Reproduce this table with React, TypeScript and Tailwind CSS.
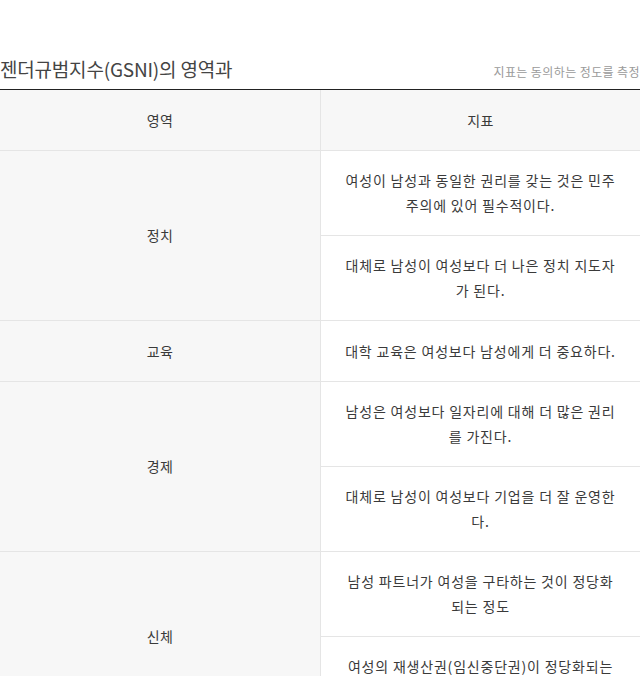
const rows: { area: string; items: string[][] }[] = [
  {
    area: "정치",
    items: [
      ["여성이 남성과 동일한 권리를 갖는 것은 민주", "주의에 있어 필수적이다."],
      ["대체로 남성이 여성보다 더 나은 정치 지도자", "가 된다."],
    ],
  },
  { area: "교육", items: [["대학 교육은 여성보다 남성에게 더 중요하다."]] },
  {
    area: "경제",
    items: [
      ["남성은 여성보다 일자리에 대해 더 많은 권리", "를 가진다."],
      ["대체로 남성이 여성보다 기업을 더 잘 운영한", "다."],
    ],
  },
  {
    area: "신체",
    items: [
      ["남성 파트너가 여성을 구타하는 것이 정당화", "되는 정도"],
      ["여성의 재생산권(임신중단권)이 정당화되는", "정도"],
    ],
  },
];

export default function App() {
  return (
    <div
      className="w-[640px] h-[676px] overflow-hidden bg-white text-[#3a3a3a]"
      style={{ fontFamily: '"Noto Sans CJK KR", "Noto Sans", sans-serif' }}
    >
      <div className="pt-[53px] flex items-end justify-between">
        <h2 className="text-[19px] leading-[32px] tracking-[-0.2px] font-normal text-[#444] pb-[4px]">
          젠더규범지수(GSNI)의 영역과
        </h2>
        <div className="whitespace-nowrap text-[12px] text-[#9a9a9a] tracking-[0.4px] pb-[8px]">
          지표는 동의하는 정도를 측정
        </div>
      </div>

      <div className="border-t border-[#222]">
        <div className="grid grid-cols-2 bg-[#f7f7f7] border-b border-[#e5e5e5] h-[61px] text-[14px]">
          <div className="flex items-center justify-center tracking-[0.4px]">영역</div>
          <div className="flex items-center justify-center border-l border-[#e5e5e5] tracking-[0.4px]">지표</div>
        </div>

        {rows.map((row) => (
          <div key={row.area} className="grid grid-cols-2 text-[14px]">
            <div className="flex items-center justify-center bg-[#f7f7f7] border-b border-[#e5e5e5] tracking-[0.4px]">
              {row.area}
            </div>
            <div className="border-l border-[#e5e5e5]">
              {row.items.map((lines, i) => (
                <div
                  key={i}
                  className={
                    "flex flex-col items-center justify-center px-4 leading-[25px] tracking-[0.8px] border-b border-[#e5e5e5] " +
                    (lines.length > 1 ? "h-[85px]" : "h-[61px]")
                  }
                >
                  {lines.map((l) => (
                    <span key={l} className="whitespace-nowrap">
                      {l}
                    </span>
                  ))}
                </div>
              ))}
            </div>
          </div>
        ))}
      </div>
    </div>
  );
}
